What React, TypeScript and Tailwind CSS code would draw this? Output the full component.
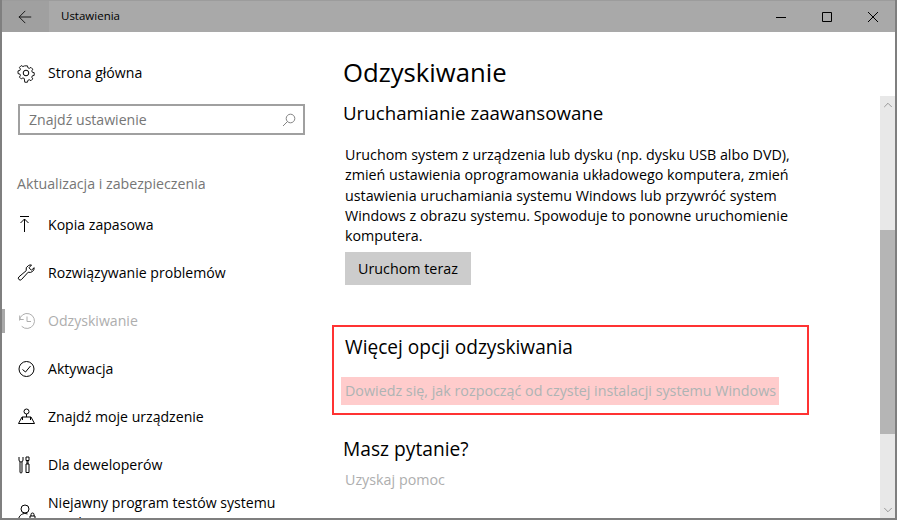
import { ArrowLeft, ChevronUp, ChevronDown } from 'lucide-react'
import type { ReactNode } from 'react'

const Icon = ({ children }: { children: ReactNode }) => (
  <svg width="20" height="20" viewBox="0 0 20 20" fill="none" stroke="currentColor" strokeWidth="1" className="shrink-0">
    {children}
  </svg>
)

const NAV: { label: string; muted?: boolean; icon: ReactNode }[] = [
  {
    label: 'Kopia zapasowa',
    icon: (
      <Icon>
        <path d="M3 1.500h9M7.500 4v13M3.500 8l4-4 4 4" />
      </Icon>
    ),
  },
  {
    label: 'Rozwiązywanie problemów',
    icon: (
      <Icon>
        <path d="M11.500 2.500a4.500 4.500 0 0 1 3-.5l-2.500 2.800 2.400 2.400 2.800-2.500a4.500 4.500 0 0 1-6 4.500L4.500 16.500a1.800 1.800 0 0 1-2.600-2.600l7.300-6.200a4.500 4.500 0 0 1 2.300-5.200z" />
      </Icon>
    ),
  },
  {
    label: 'Odzyskiwanie',
    muted: true,
    icon: (
      <Icon>
        <path d="M2.500 9.500a7.500 7.500 0 1 1 2.200 5.800M2.700 4.500v4h4M10 5.500v5h4" />
      </Icon>
    ),
  },
  {
    label: 'Aktywacja',
    icon: (
      <Icon>
        <circle cx="9.500" cy="10" r="7.500" />
        <path d="M5.500 10.500l3 2.500 5-6" />
      </Icon>
    ),
  },
  {
    label: 'Znajdź moje urządzenie',
    icon: (
      <Icon>
        <circle cx="9.500" cy="4.500" r="2.500" />
        <path d="M9.500 7v3M1.500 16.500L5 10h9l3.500 6.500zM5.500 10v3M13.500 10v3" />
      </Icon>
    ),
  },
  {
    label: 'Dla deweloperów',
    icon: (
      <Icon>
        <path d="M2 2v3a2 2 0 0 0 4 0V2M3 7v10a1 1 0 0 0 2 0V7M9 2h3v3.500H9zM10 5.500V9M11 5.500V9M9 9h3v8.500H9z" />
      </Icon>
    ),
  },
  {
    label: 'Niejawny program testów systemu Windows',
    icon: (
      <Icon>
        <circle cx="8" cy="6" r="4" />
        <path d="M1.500 17a6.500 6.500 0 0 1 9-6M13 13h5v5h-5zM14 13v-1.500a1.500 1.500 0 0 1 3 0V13" />
      </Icon>
    ),
  },
]

export default function App() {
  return (
    <div className="relative flex h-[520px] w-[897px] flex-col overflow-hidden border-b-2 border-l-2 border-r-2 border-[#7f7f7f] bg-white font-['Open_Sans',sans-serif] text-[14.100px] text-black">
      {/* Title bar */}
      <div className="-ml-[2px] -mr-[2px] flex h-[32px] shrink-0 items-center border-t border-[#9c9c9c] bg-[#a9a9a9]">
        <div className="flex h-full w-[49px] items-center justify-center bg-[#a0a0a0]">
          <ArrowLeft size={20} strokeWidth={1} />
        </div>
        <span className="ml-[12px] -translate-y-px text-[11.500px]">Ustawienia</span>
        <div className="ml-auto mr-px flex h-full items-center">
          <div className="flex w-[46px] justify-center">
            <svg width="10" height="10" viewBox="0 0 10 10" stroke="black" fill="none"><path d="M0 5.500h10" /></svg>
          </div>
          <div className="flex w-[46px] justify-center">
            <svg width="10" height="10" viewBox="0 0 10 10" stroke="black" fill="none"><path d="M.5.500h9v9h-9z" /></svg>
          </div>
          <div className="flex w-[46px] justify-center">
            <svg width="10" height="10" viewBox="0 0 10 10" stroke="black" fill="none"><path d="M0 0l10 10M10 0L0 10" /></svg>
          </div>
        </div>
      </div>

      <div className="flex min-h-0 flex-1">
        {/* Sidebar */}
        <aside className="w-[328px] shrink-0 overflow-hidden">
          <div className="mt-[25px] flex h-[32px] items-center gap-[11px] pl-[15px]">
            <svg width="20" height="20" viewBox="0 0 20 20" fill="none" stroke="currentColor" strokeWidth="1" className="shrink-0">
              <circle cx="9" cy="10" r="2.800" />
              <path d="M7.500 2.500h3l.5 2.100 1.500.7 1.900-1.100 2 2-1.100 1.900.6 1.500 2.100.5v3l-2.100.5-.6 1.500 1.100 1.900-2 2-1.900-1.100-1.500.7-.5 2.100h-3L7 16.600l-1.500-.7-1.900 1.100-2-2 1.100-1.900-.6-1.500L0 11.100v-3l2.100-.5.6-1.500-1.100-1.900 2-2 1.900 1.100 1.500-.7z" transform="translate(1 .6) scale(.9)" />
            </svg>
            <span>Strona główna</span>
          </div>
          <div className="ml-[16px] mt-[15px] flex h-[31px] w-[287px] items-center justify-between border-2 border-[#a0a0a0] pl-[9px] pr-[7px] text-[#767676]">
            <span>Znajdź ustawienie</span>
            <svg width="14" height="14" viewBox="0 0 14 14" fill="none" stroke="#767676" strokeWidth="0.9">
              <circle cx="8.500" cy="5.500" r="4.300" />
              <path d="M5.500 8.500L1 13" />
            </svg>
          </div>
          <div className="ml-[15px] mt-[38px] text-[14.200px] text-[#767676]">Aktualizacja i zabezpieczenia</div>
          <nav className="mt-[7px] flex flex-col">
            {NAV.map((n) => (
              <div key={n.label} className={`relative flex h-[48px] items-center gap-[11px] pl-[15px] ${n.muted ? 'text-[#aeaeae]' : ''}`}>
                {n.muted && <div className="absolute left-[-2px] top-[12px] h-[24px] w-[5px] bg-[#a9a9a9]" />}
                {n.icon}
                <span className="w-[240px] leading-[20px]">{n.label}</span>
              </div>
            ))}
          </nav>
        </aside>

        {/* Content */}
        <main className="min-w-0 flex-1 overflow-hidden pl-[14px]">
          <h1 className="-ml-px mt-[21px] text-[25.700px] leading-[40px]">Odzyskiwanie</h1>
          <h2 className="-ml-px mt-[5px] text-[18.700px] leading-[30px]">Uruchamianie zaawansowane</h2>
          <p className="ml-[1px] mt-[17px] w-[470px] text-[14.300px] leading-[20.250px]">
            Uruchom system z urządzenia lub dysku (np. dysku USB albo DVD), zmień ustawienia oprogramowania układowego komputera, zmień ustawienia uruchamiania systemu Windows lub przywróć system Windows z obrazu systemu. Spowoduje to ponowne uruchomienie komputera.
          </p>
          <button className="ml-[1px] mt-[6px] h-[33px] w-[126px] bg-[#cccccc] text-[14.300px]">Uruchom teraz</button>
          <section className="relative -ml-[12px] mt-[40px] h-[90px] w-[477px] border-2 border-[#ff3333] pl-[11px]">
            <h2 className="mt-[5px] text-[19.100px] leading-[30px]">Więcej opcji odzyskiwania</h2>
            <div className="-ml-[4px] mt-[15px] flex h-[28px] w-[438px] items-center whitespace-nowrap bg-[#ffcccc] px-[4px] pb-[2px] text-[14.300px] text-[#aeb4b4]">
              Dowiedz się, jak rozpocząć od czystej instalacji systemu Windows
            </div>
          </section>
          <h2 className="-ml-px mt-[19px] text-[19.200px] leading-[30px]">Masz pytanie?</h2>
          <div className="ml-[1px] mt-[5px] text-[14.300px] text-[#aeaeae]">Uzyskaj pomoc</div>
        </main>

        {/* Scrollbar */}
        <div className="mt-[64px] flex w-[15px] shrink-0 flex-col bg-[#e8e8e8] text-[#606060]">
          <div className="flex h-[17px] items-center justify-center"><ChevronUp size={14} strokeWidth={1} /></div>
          <div className="mt-[117px] h-[204px] bg-[#b5b5b5]" />
          <div className="mt-auto flex h-[17px] items-center justify-center"><ChevronDown size={14} strokeWidth={1} /></div>
        </div>
      </div>
    </div>
  )
}
